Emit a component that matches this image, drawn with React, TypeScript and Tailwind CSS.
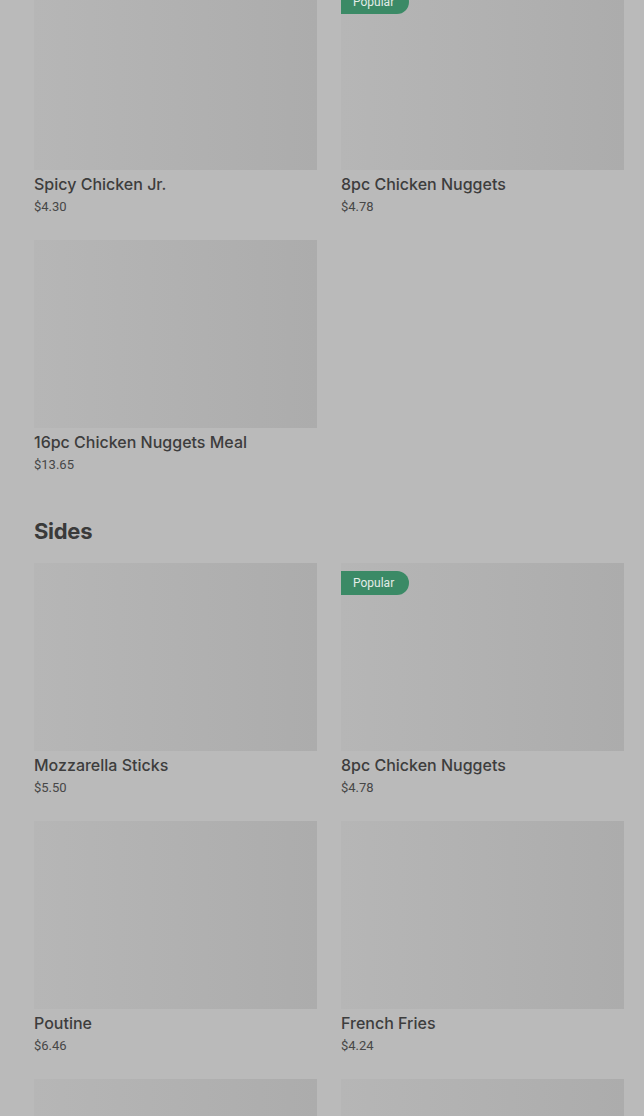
import React from 'react';

type Item = { name: string; price: string; popular?: boolean };

const sections: { title?: string; items: Item[] }[] = [
  {
    items: [
      { name: 'Spicy Chicken Jr.', price: '$4.30' },
      { name: '8pc Chicken Nuggets', price: '$4.78', popular: true },
      { name: '16pc Chicken Nuggets Meal', price: '$13.65' },
    ],
  },
  {
    title: 'Sides',
    items: [
      { name: 'Mozzarella Sticks', price: '$5.50' },
      { name: '8pc Chicken Nuggets', price: '$4.78', popular: true },
      { name: 'Poutine', price: '$6.46' },
      { name: 'French Fries', price: '$4.24' },
      { name: 'Onion Rings', price: '$4.99' },
      { name: 'Chili', price: '$3.89' },
    ],
  },
];

function Card({ item }: { item: Item }) {
  return (
    <div className="flex flex-col">
      <div className="relative h-[188px] bg-gradient-to-r from-[#b6b6b6] via-[#b1b1b1] to-[#acacac]">
        {item.popular && (
          <span className="absolute left-0 top-2 h-6 w-[68px] pl-3 flex items-center rounded-r-full bg-[#3b8a66] text-[12px] text-[#e4ece8] font-['Roboto',sans-serif]">
            Popular
          </span>
        )}
      </div>
      <div className="mt-[1px] text-base leading-[26px] font-medium text-[#3d3d3d] font-['Inter',sans-serif]">
        {item.name}
      </div>
      <div className="text-[13px] leading-5 text-[#474747] font-['Roboto',sans-serif]">{item.price}</div>
    </div>
  );
}

export default function App() {
  return (
    <div className="min-h-[1116px] h-[1116px] overflow-hidden bg-[#bababa]">
      <div className="-mt-[18px] pl-[34px] pr-5 flex flex-col gap-10">
        {sections.map((section, i) => (
          <section key={i} className="flex flex-col">
            {section.title && (
              <h2 className="mb-4 text-[22px] leading-8 font-bold text-[#3a3a3a] font-['Inter',sans-serif] tracking-[-0.3px]">
                {section.title}
              </h2>
            )}
            <div className="grid grid-cols-2 gap-x-6 gap-y-[23px]">
              {section.items.map((item, j) => (
                <Card key={j} item={item} />
              ))}
            </div>
          </section>
        ))}
      </div>
    </div>
  );
}
